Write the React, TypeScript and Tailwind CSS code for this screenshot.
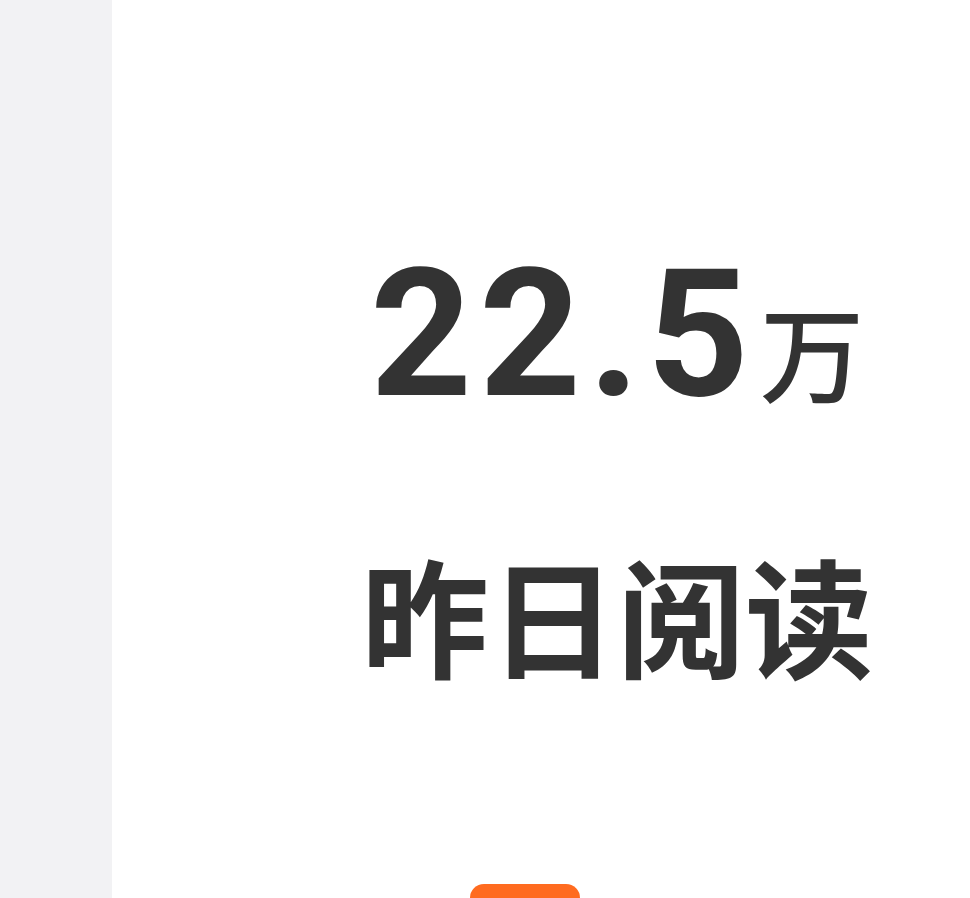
export default function App() {
  return (
    <div className="flex h-[898px] w-[970px] overflow-hidden bg-white" style={{ fontFamily: '"Noto Sans CJK SC", Roboto, sans-serif' }}>
      <div className="h-full w-[112px] shrink-0 bg-[#f2f2f4]" />
      <div className="flex flex-1 flex-col">
        <div className="flex flex-col items-center pl-[152px] pt-[245px]">
          <div className="flex items-baseline text-[#333333] leading-none">
            <span className="text-[178px] font-bold tracking-[7px]" style={{ fontFamily: 'Roboto, "Noto Sans CJK SC", sans-serif' }}>
              22.5
            </span>
            <span className="ml-[4px] text-[104px] font-medium">万</span>
          </div>
          <div className="mt-[127px] text-[128px] font-bold leading-none text-[#333333]">昨日阅读</div>
        </div>
        <div className="mt-auto pl-[358px]">
          <div className="h-[14px] w-[110px] rounded-t-[22px] bg-[#ff6b1f]" />
        </div>
      </div>
    </div>
  );
}
